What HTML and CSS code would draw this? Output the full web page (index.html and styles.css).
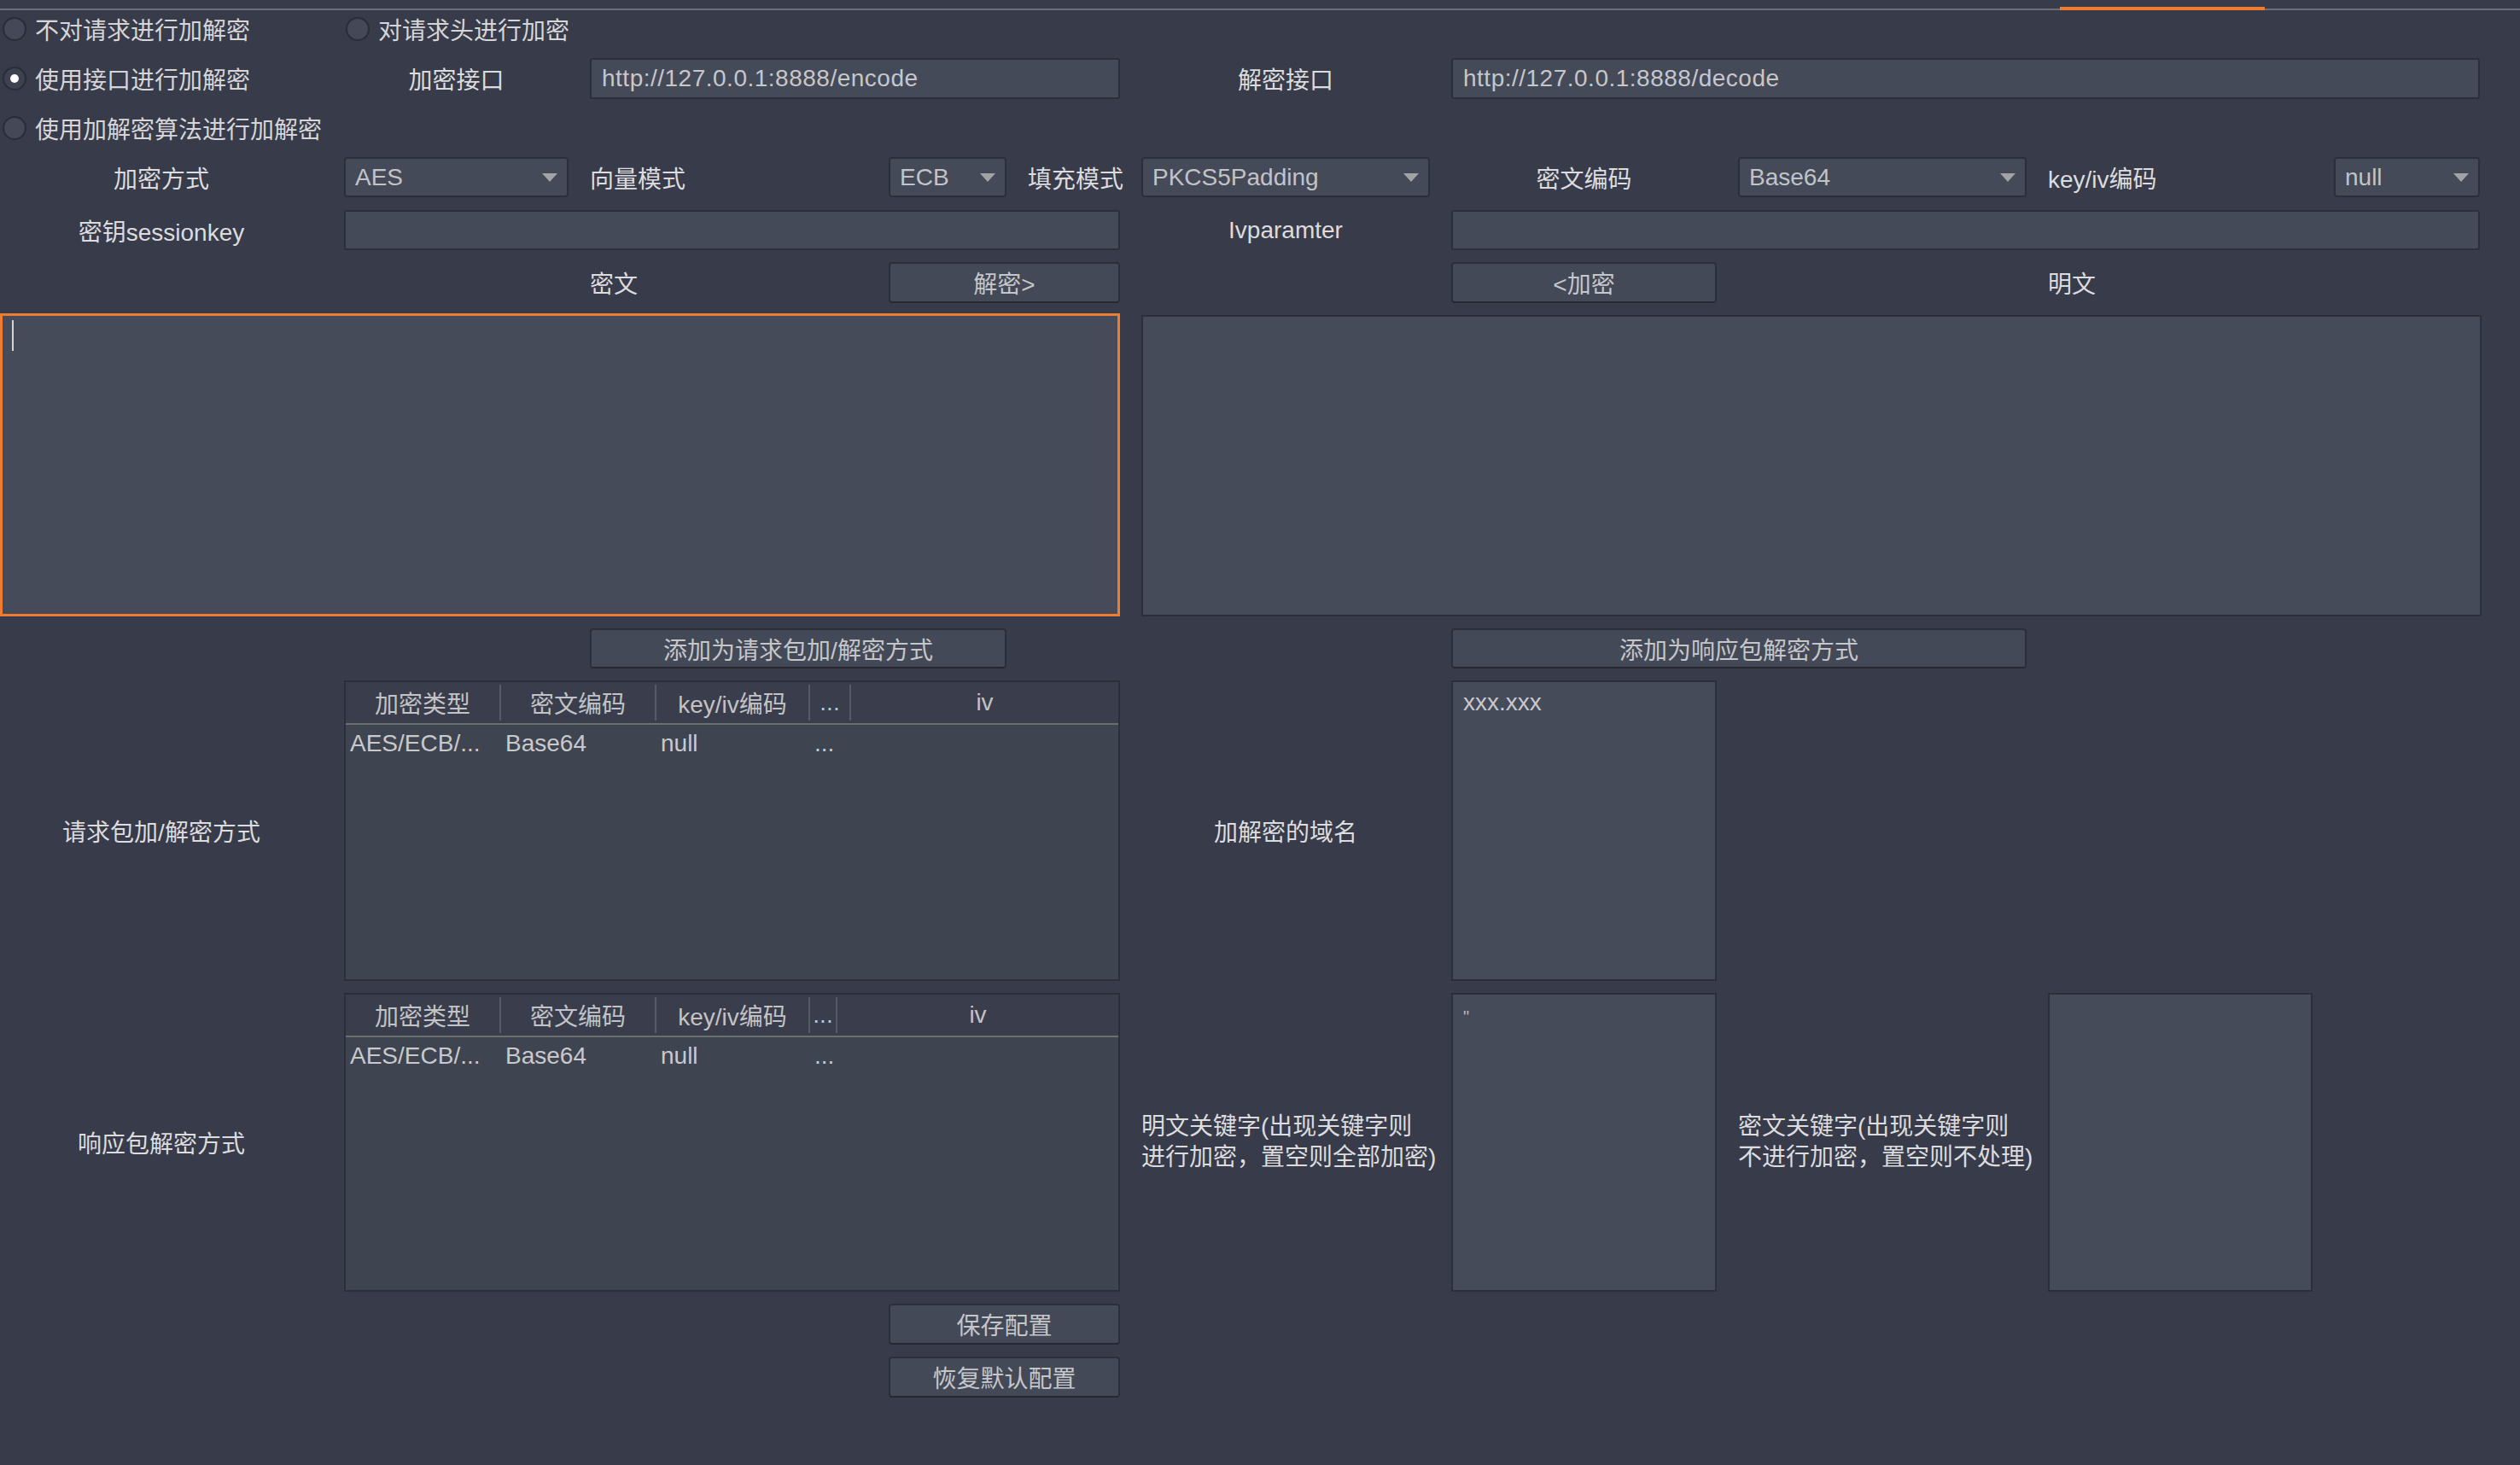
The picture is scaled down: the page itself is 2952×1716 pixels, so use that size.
FILE: index.html
```html
<!DOCTYPE html>
<html lang="zh-CN">
<head>
<meta charset="utf-8">
<title>加解密配置</title>
<link rel="stylesheet" href="styles.css">
</head>
<body>
<div class="tabline">
  <div class="tl-left"></div>
  <div class="tl-active"></div>
  <div class="tl-right"></div>
</div>

<div class="form">
  <!-- row 1 -->
  <div class="radio r1 c1"><span class="dot"></span><span>不对请求进行加解密</span></div>
  <div class="radio second r1 c2-3"><span class="dot"></span><span>对请求头进行加密</span></div>

  <!-- row 2 -->
  <div class="radio r2 c1"><span class="dot on"></span><span>使用接口进行加解密</span></div>
  <div class="label r2 c2">加密接口</div>
  <div class="field r2 c3-5">http://127.0.0.1:8888/encode</div>
  <div class="label r2 c6">解密接口</div>
  <div class="field r2 c7-10">http://127.0.0.1:8888/decode</div>

  <!-- row 3 -->
  <div class="radio r3 c1"><span class="dot"></span><span>使用加解密算法进行加解密</span></div>

  <!-- row 4 -->
  <div class="label r4 c1">加密方式</div>
  <div class="combo r4 c2"><span>AES</span><svg width="18" height="10" viewBox="0 0 18 10"><path d="M0 0H18L9 10Z" fill="#a2a3a6"/></svg></div>
  <div class="label left r4 c3">向量模式</div>
  <div class="combo r4 c4"><span>ECB</span><svg width="18" height="10" viewBox="0 0 18 10"><path d="M0 0H18L9 10Z" fill="#a2a3a6"/></svg></div>
  <div class="label left r4 c5">填充模式</div>
  <div class="combo r4 c6"><span>PKCS5Padding</span><svg width="18" height="10" viewBox="0 0 18 10"><path d="M0 0H18L9 10Z" fill="#a2a3a6"/></svg></div>
  <div class="label r4 c7">密文编码</div>
  <div class="combo r4 c8"><span>Base64</span><svg width="18" height="10" viewBox="0 0 18 10"><path d="M0 0H18L9 10Z" fill="#a2a3a6"/></svg></div>
  <div class="label left r4 c9">key/iv编码</div>
  <div class="combo r4 c10"><span>null</span><svg width="18" height="10" viewBox="0 0 18 10"><path d="M0 0H18L9 10Z" fill="#a2a3a6"/></svg></div>

  <!-- row 5 -->
  <div class="label r5 c1">密钥sessionkey</div>
  <div class="field r5 c2-5"></div>
  <div class="label r5 c6">Ivparamter</div>
  <div class="field r5 c7-10"></div>

  <!-- row 6 -->
  <div class="label left r6 c3">密文</div>
  <div class="btn r6 c4-5">解密&gt;</div>
  <div class="btn r6 c7">&lt;加密</div>
  <div class="label left r6 c9">明文</div>

  <!-- row 7 -->
  <div class="area focus r7 c1-5"><span class="caret"></span></div>
  <div class="area wide r7 c6-10"></div>

  <!-- row 8 -->
  <div class="btn r8 c3-4">添加为请求包加/解密方式</div>
  <div class="btn r8 c7-8">添加为响应包解密方式</div>

  <!-- row 9 -->
  <div class="label r9 c1">请求包加/解密方式</div>
  <div class="table r9 c2-5">
    <div class="thead cols-a">
      <div class="th">加密类型</div>
      <div class="th">密文编码</div>
      <div class="th">key/iv编码</div>
      <div class="th">...</div>
      <div class="th">iv</div>
    </div>
    <div class="tr cols-a">
      <div class="td">AES/ECB/...</div>
      <div class="td">Base64</div>
      <div class="td">null</div>
      <div class="td">...</div>
      <div class="td"></div>
    </div>
  </div>
  <div class="label r9 c6">加解密的域名</div>
  <div class="area text r9 c7">xxx.xxx</div>

  <!-- row 10 -->
  <div class="label r10 c1">响应包解密方式</div>
  <div class="table r10 c2-5">
    <div class="thead cols-b">
      <div class="th">加密类型</div>
      <div class="th">密文编码</div>
      <div class="th">key/iv编码</div>
      <div class="th">...</div>
      <div class="th">iv</div>
    </div>
    <div class="tr cols-b">
      <div class="td">AES/ECB/...</div>
      <div class="td">Base64</div>
      <div class="td">null</div>
      <div class="td">...</div>
      <div class="td"></div>
    </div>
  </div>
  <div class="label left multi r10 c6">明文关键字(出现关键字则<br>进行加密，置空则全部加密)</div>
  <div class="area text r10 c7"><span class="quote">"</span></div>
  <div class="label left multi r10 c8">密文关键字(出现关键字则<br>不进行加密，置空则不处理)</div>
  <div class="area r10 c9"></div>

  <!-- row 11/12 -->
  <div class="btn r11 c4-5">保存配置</div>
  <div class="btn r12 c4-5">恢复默认配置</div>
</div>
</body>
</html>
```

FILE: styles.css
```css
* {
  box-sizing: border-box;
}

body {
  margin: 0;
  width: 2952px;
  height: 1716px;
  overflow: hidden;
  background: #383b4a;
  color: #d9d9d9;
  font-family: "Liberation Sans", "Noto Sans CJK SC", sans-serif;
  font-size: 28px;
}

/* tab bar underline */
.tabline {
  display: flex;
  align-items: flex-end;
  height: 12px;
}
.tl-left {
  width: 2413px;
  height: 2px;
  background: #6e6f73;
}
.tl-active {
  width: 240px;
  height: 4px;
  background: #ee7b2f;
}
.tl-right {
  flex: 1;
  height: 2px;
  background: #6e6f73;
}

/* main grid */
.form {
  display: grid;
  margin-top: 2px;
  grid-template-columns: 378px 263px 325px 138px 108px 338px 311px 338px 310px 171px;
  grid-template-rows: 40px 48px 40px 48px 47px 48px 353px 47px 352px 350px 48px 48px;
  column-gap: 25px;
  row-gap: 14px;
}

.r1 { grid-row: 1; }
.r2 { grid-row: 2; }
.r3 { grid-row: 3; }
.r4 { grid-row: 4; }
.r5 { grid-row: 5; }
.r6 { grid-row: 6; }
.r7 { grid-row: 7; }
.r8 { grid-row: 8; }
.r9 { grid-row: 9; }
.r10 { grid-row: 10; }
.r11 { grid-row: 11; }
.r12 { grid-row: 12; }

.c1 { grid-column: 1; }
.c2 { grid-column: 2; }
.c3 { grid-column: 3; }
.c4 { grid-column: 4; }
.c5 { grid-column: 5; }
.c6 { grid-column: 6; }
.c7 { grid-column: 7; }
.c8 { grid-column: 8; }
.c9 { grid-column: 9; }
.c10 { grid-column: 10; }
.c2-3 { grid-column: 2 / 4; }
.c3-4 { grid-column: 3 / 5; }
.c3-5 { grid-column: 3 / 6; }
.c4-5 { grid-column: 4 / 6; }
.c2-5 { grid-column: 2 / 6; }
.c1-5 { grid-column: 1 / 6; }
.c6-10 { grid-column: 6 / 11; }
.c7-8 { grid-column: 7 / 9; }
.c7-10 { grid-column: 7 / 11; }

/* radios */
.radio {
  display: flex;
  align-items: center;
  gap: 10px;
  padding-left: 3px;
  white-space: nowrap;
  color: #d6d6d8;
}
.radio.second {
  padding-left: 2px;
}
.dot {
  flex: none;
  width: 28px;
  height: 28px;
  border-radius: 50%;
  background: #444857;
  border: 2px solid #2a2d37;
  display: flex;
  align-items: center;
  justify-content: center;
}
.dot.on {
  background: #3d4150;
}
.dot.on::after {
  content: "";
  width: 10px;
  height: 10px;
  border-radius: 50%;
  background: #ffffff;
}

/* labels */
.label {
  display: flex;
  align-items: center;
  justify-content: center;
  white-space: nowrap;
  color: #dcdcde;
}
.label.left {
  justify-content: flex-start;
}
.label.multi {
  line-height: 36px;
}

/* text fields */
.field {
  display: flex;
  align-items: center;
  padding-left: 12px;
  background: #454a59;
  border: 2px solid #2c2f39;
  border-radius: 3px;
  color: #c6c7ca;
  letter-spacing: 0.5px;
  white-space: nowrap;
  overflow: hidden;
}

/* combo boxes */
.combo {
  height: 47px;
  display: flex;
  align-items: center;
  justify-content: space-between;
  padding: 0 11px;
  background: #454a59;
  border: 2px solid #2c2f39;
  border-radius: 4px;
  color: #c2c3c6;
  white-space: nowrap;
}
.combo svg {
  flex: none;
}

/* buttons */
.btn {
  display: flex;
  align-items: center;
  justify-content: center;
  background: #444957;
  border: 2px solid #2c2f39;
  border-bottom-color: #262932;
  border-radius: 4px;
  color: #c5c6c9;
  white-space: nowrap;
}

/* text areas */
.area {
  background: #464b5a;
  border: 2px solid #2c2f39;
}
.area.wide {
  margin-right: -2px;
}
.area.focus {
  margin-top: -2px;
  border: 3px solid #ef7c31;
  padding: 5px 0 0 11px;
}
.caret {
  display: block;
  width: 2px;
  height: 36px;
  background: #d4d4d4;
}
.area.text {
  padding: 7px 12px;
  line-height: 34px;
  color: #c8c9cc;
}
.quote {
  font-size: 20px;
  color: #b8b9bc;
}

/* tables */
.table {
  display: flex;
  flex-direction: column;
  background: #3f4451;
  border: 2px solid #2c2f39;
  color: #c8c9cc;
}
.cols-a {
  display: grid;
  grid-template-columns: 180px 182px 180px 48px 1fr;
}
.cols-b {
  display: grid;
  grid-template-columns: 180px 182px 180px 32px 1fr;
}
.thead {
  height: 50px;
  padding: 3px 0;
  background: #3a3e4c;
  border-bottom: 2px solid #6b6f6c;
  color: #c2c3c6;
}
.th {
  display: flex;
  align-items: center;
  justify-content: center;
  white-space: nowrap;
  overflow: hidden;
}
.th + .th {
  border-left: 2px solid #575b64;
}
.tr {
  height: 44px;
  align-items: center;
}
.td {
  padding-left: 7px;
  white-space: nowrap;
  overflow: hidden;
}
.td:first-child {
  padding-left: 5px;
}
```
